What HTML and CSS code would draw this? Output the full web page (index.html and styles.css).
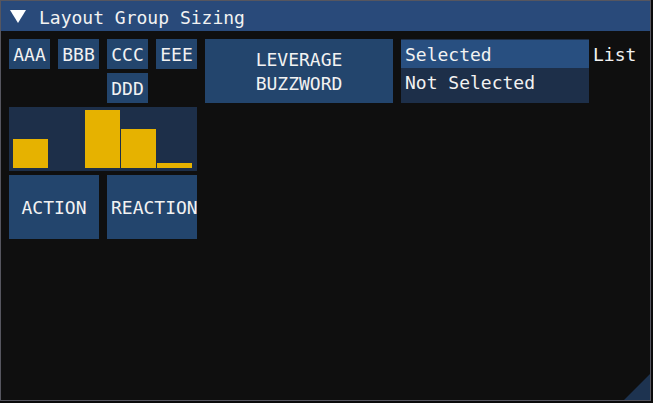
FILE: index.html
```html
<!DOCTYPE html>
<html>
<head>
<meta charset="utf-8">
<link rel="stylesheet" href="styles.css">
</head>
<body>
<div class="window">
  <div class="titlebar">
    <svg class="arrow" width="16" height="14" viewBox="0 0 16 14"><polygon points="0,0 16,0 8,13" fill="#ffffff"/></svg>
    <span class="title">Layout Group Sizing</span>
  </div>
  <div class="content">
    <div class="group">
      <div class="row">
        <div class="btn small">AAA</div>
        <div class="btn small">BBB</div>
        <div class="col">
          <div class="btn small">CCC</div>
          <div class="btn small">DDD</div>
        </div>
        <div class="btn small">EEE</div>
      </div>
      <div class="plot">
        <div class="bar" style="height:29px"></div>
        <div class="bar" style="height:0px"></div>
        <div class="bar" style="height:58px"></div>
        <div class="bar" style="height:39px"></div>
        <div class="bar" style="height:5px"></div>
      </div>
      <div class="row">
        <div class="btn big">ACTION</div>
        <div class="btn big clip">REACTION</div>
      </div>
    </div>
    <div class="btn buzz">LEVERAGE<br>BUZZWORD</div>
    <div class="listbox">
      <div class="item selected">Selected</div>
      <div class="item">Not Selected</div>
    </div>
    <div class="label">List</div>
  </div>
  <div class="grip"></div>
</div>
</body>
</html>
```
FILE: styles.css
```css
html, body {
  margin: 0;
  padding: 0;
  background: #0b0b0b;
}
body {
  width: 653px;
  height: 403px;
  overflow: hidden;
  font-family: "DejaVu Sans Mono", "Liberation Mono", monospace;
  font-size: 18px;
  line-height: 24px;
  color: #f2f2f2;
}
.window {
  position: relative;
  width: 651px;
  height: 401px;
  box-sizing: border-box;
  border: 1px solid #56565f;
  background: #0f0f0f;
  overflow: hidden;
}
.titlebar {
  height: 30px;
  background: #294a7a;
  display: flex;
  align-items: center;
  padding-left: 9px;
  box-sizing: border-box;
}
.arrow {
  display: block;
  margin-top: 2px;
}
.title {
  margin-left: 13px;
  padding-top: 3px;
}
.content {
  display: flex;
  align-items: flex-start;
  gap: 8px;
  padding: 8px 0 0 8px;
}
.group {
  display: flex;
  flex-direction: column;
  gap: 4px;
  width: 188px;
}
.row {
  display: flex;
  align-items: flex-start;
  gap: 8px;
}
.col {
  display: flex;
  flex-direction: column;
  gap: 4px;
}
.btn {
  background: #23456d;
  display: flex;
  align-items: center;
  justify-content: center;
  text-align: center;
  white-space: nowrap;
  overflow: hidden;
  box-sizing: border-box;
  padding-top: 2px;
}
.small {
  width: 41px;
  height: 30px;
}
.big {
  width: 90px;
  height: 64px;
}
.clip {
  justify-content: flex-start;
  padding-left: 4px;
}
.buzz {
  width: 188px;
  height: 64px;
}
.plot {
  width: 188px;
  height: 64px;
  background: #1d2f49;
  box-sizing: border-box;
  padding: 3px 4px 3px 4px;
  display: flex;
  align-items: flex-end;
}
.bar {
  width: 35px;
  margin-right: 1px;
  background: #e6b200;
}
.listbox {
  width: 188px;
  height: 64px;
  background: #1d2f49;
  box-sizing: border-box;
  padding-top: 1px;
}
.item {
  height: 28px;
  box-sizing: border-box;
  padding: 3px 0 0 4px;
  white-space: nowrap;
}
.selected {
  background: #284f80;
}
.label {
  margin-left: -4px;
  padding-top: 4px;
}
.grip {
  position: absolute;
  right: 0;
  bottom: 0;
  width: 26px;
  height: 26px;
  background: #1d3350;
  clip-path: polygon(100% 0, 100% 100%, 0 100%);
}
```
